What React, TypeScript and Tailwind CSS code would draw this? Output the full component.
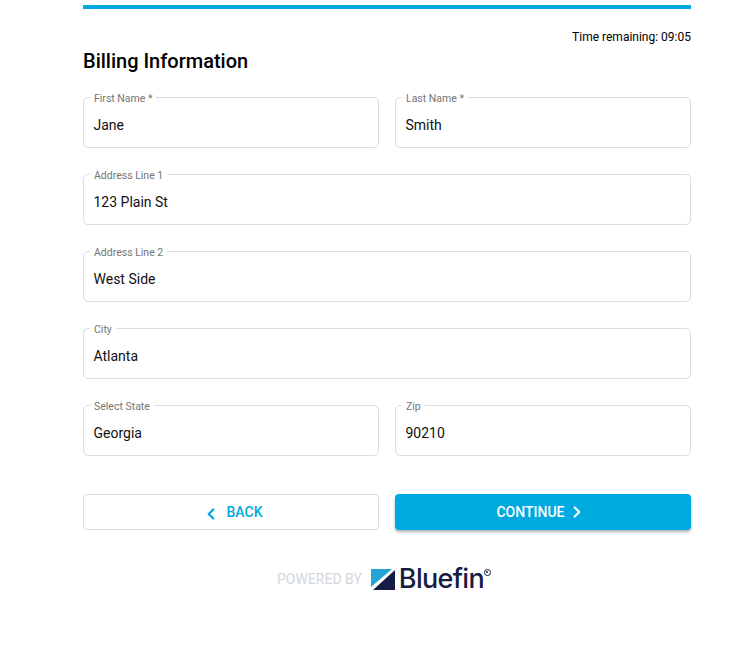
import { ChevronLeft, ChevronRight } from "lucide-react";

function Field({ label, value }: { label: string; value: string }) {
  return (
    <div className="relative flex h-[51px] items-center rounded-[5px] border border-[#dcdcdc] bg-white pl-[9.5px] pt-[4px]">
      <span className="absolute left-[6px] top-[-6px] bg-white px-1 text-[10.5px] leading-[13px] text-[#757575]">
        {label}
      </span>
      <span className="text-sm text-[#111]">{value}</span>
    </div>
  );
}

function BluefinLogo() {
  return (
    <div className="flex items-center">
      <svg width="24" height="21" viewBox="0 0 24 21" className="mr-[4px]">
        <polygon points="0,0 21,0 0,18" fill="#22a5d6" />
        <polygon points="24,1 24,21 2,21" fill="#171c45" />
      </svg>
      <span className="font-['Inter',sans-serif] text-[27px] font-medium leading-[24px] tracking-[-0.7px] text-[#171c45]">
        Bluefin
      </span>
      <span className="mb-[14px] flex size-[7px] items-center justify-center rounded-full border border-[#171c45]">
        <span className="size-[2px] rounded-full bg-[#171c45]" />
      </span>
    </div>
  );
}

export default function App() {
  return (
    <div className="h-[650px] bg-white font-['Roboto',sans-serif]">
      <div className="ml-[83px] w-[608px] pt-[5px]">
        <div className="h-1 bg-[#00a9e0]" />
        <p className="mt-[21px] text-right text-xs leading-[14px] text-black">Time remaining: 09:05</p>
        <h1 className="mt-[2px] text-xl font-medium leading-[30px] text-black">Billing Information</h1>

        <div className="mt-[21px] flex flex-col gap-[26px]">
          <div className="grid grid-cols-2 gap-4">
            <Field label="First Name *" value="Jane" />
            <Field label="Last Name *" value="Smith" />
          </div>
          <Field label="Address Line 1" value="123 Plain St" />
          <Field label="Address Line 2" value="West Side" />
          <Field label="City" value="Atlanta" />
          <div className="grid grid-cols-2 gap-4">
            <Field label="Select State" value="Georgia" />
            <Field label="Zip" value="90210" />
          </div>
        </div>

        <div className="mt-[38px] grid grid-cols-2 gap-4">
          <button className="flex h-9 items-center justify-center gap-[6px] rounded-[4px] border border-[#dcdcdc] bg-white pl-[3px] text-sm font-medium text-[#00a9e0]">
            <ChevronLeft className="mt-[3px] size-[18px]" strokeWidth={3} />
            BACK
          </button>
          <button className="flex h-9 items-center justify-center gap-[3px] rounded-[4px] bg-[#00a9e0] pr-[4px] text-sm font-medium text-white shadow-[0_2px_3px_rgba(0,0,0,0.3)]">
            CONTINUE
            <ChevronRight className="size-[18px]" strokeWidth={3} />
          </button>
        </div>

        <div className="mt-[37px] flex items-center justify-center gap-[9px] pr-[6px]">
          <span className="text-sm text-[#d4d6de]">POWERED BY</span>
          <BluefinLogo />
        </div>
      </div>
    </div>
  );
}
